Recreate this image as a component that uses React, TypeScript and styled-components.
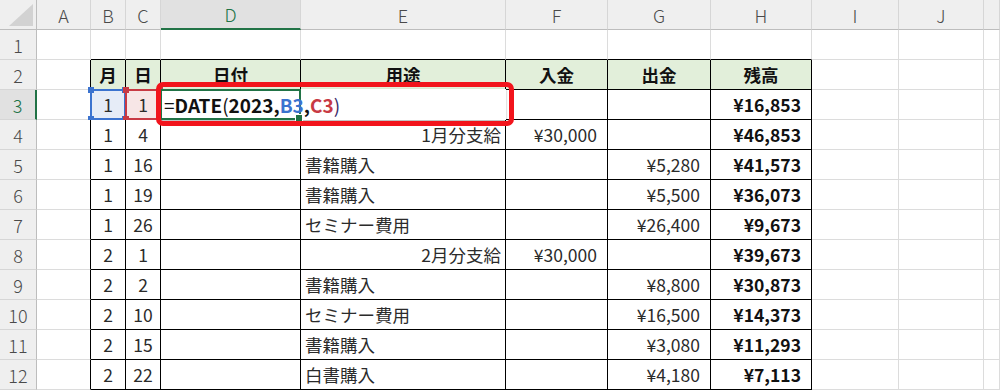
import styled, { createGlobalStyle } from "styled-components";

const GlobalStyle = createGlobalStyle`
  html, body { margin: 0; padding: 0; background: #fff; }
  body { font-family: "Noto Sans CJK JP", "Liberation Sans", sans-serif; }
`;

const GREEN = "#217346";
const GRID = "#dcdcdc";
const HEAD_LINE = "#bdbdbd";

const COLS = ["A", "B", "C", "D", "E", "F", "G", "H", "I", "J", ""];
const WIDTHS = [54, 35, 35, 140, 205, 102, 103, 101, 87, 85];

const DATA: Record<number, string[]> = {
  2: ["月", "日", "日付", "用途", "入金", "出金", "残高"],
  3: ["1", "1", "", "", "", "", "¥16,853"],
  4: ["1", "4", "", "1月分支給", "¥30,000", "", "¥46,853"],
  5: ["1", "16", "", "書籍購入", "", "¥5,280", "¥41,573"],
  6: ["1", "19", "", "書籍購入", "", "¥5,500", "¥36,073"],
  7: ["1", "26", "", "セミナー費用", "", "¥26,400", "¥9,673"],
  8: ["2", "1", "", "2月分支給", "¥30,000", "", "¥39,673"],
  9: ["2", "2", "", "書籍購入", "", "¥8,800", "¥30,873"],
  10: ["2", "10", "", "セミナー費用", "", "¥16,500", "¥14,373"],
  11: ["2", "15", "", "書籍購入", "", "¥3,080", "¥11,293"],
  12: ["2", "22", "", "白書購入", "", "¥4,180", "¥7,113"],
};

const inTable = (r: number, c: number) => r >= 2 && r <= 12 && c >= 1 && c <= 7;

const Sheet = styled.div`
  position: relative;
  display: grid;
  grid-template-columns: 37px ${WIDTHS.map((w) => w + "px").join(" ")} 1fr;
  grid-template-rows: 30px;
  grid-auto-rows: 30px;
  width: 1000px;
  height: 390px;
  overflow: hidden;
  color: #262626;
`;

const Corner = styled.div`
  position: relative;
  background: #efefef;
  border-right: 1px solid ${HEAD_LINE};
  border-bottom: 1px solid ${HEAD_LINE};
  box-sizing: border-box;
  svg { position: absolute; left: 9px; top: 4px; }
`;

const ColHeader = styled.div<{ $active?: boolean }>`
  box-sizing: border-box;
  display: flex;
  align-items: center;
  justify-content: center;
  background: ${(p) => (p.$active ? "#e1e1e1" : "#efefef")};
  color: ${(p) => (p.$active ? GREEN : "#4a4a4a")};
  border-right: 1px solid #d6d6d6;
  border-bottom: ${(p) => (p.$active ? `2px solid ${GREEN}` : `1px solid ${HEAD_LINE}`)};
  font-size: 18px;
  font-weight: 300;
`;

const RowHeader = styled.div<{ $active?: boolean }>`
  box-sizing: border-box;
  display: flex;
  align-items: center;
  justify-content: center;
  background: ${(p) => (p.$active ? "#e1e1e1" : "#efefef")};
  color: ${(p) => (p.$active ? GREEN : "#4a4a4a")};
  border-right: ${(p) => (p.$active ? `2px solid ${GREEN}` : `1px solid ${HEAD_LINE}`)};
  border-bottom: 1px solid #d6d6d6;
  font-size: 18px;
  font-weight: 300;
`;

const Cell = styled.div<{
  $align: "left" | "center" | "right";
  $bold?: boolean;
  $fill?: string;
  $br: string;
  $bb: string;
  $pr?: number;
}>`
  position: relative;
  box-sizing: border-box;
  display: flex;
  align-items: center;
  justify-content: ${(p) =>
    p.$align === "left" ? "flex-start" : p.$align === "right" ? "flex-end" : "center"};
  padding: 0 ${(p) => p.$pr ?? 4}px 0 4px;
  background: ${(p) => p.$fill ?? "#fff"};
  border-right: 1px solid ${(p) => p.$br};
  border-bottom: 1px solid ${(p) => p.$bb};
  font-size: 17.5px;
  font-weight: ${(p) => (p.$bold ? 700 : 400)};
  white-space: nowrap;
  color: ${(p) => (p.$bold ? "#111" : "#2b2b2b")};
`;

const RefFrame = styled.div<{ $color: string }>`
  position: absolute;
  left: -1px;
  top: -1px;
  right: -1px;
  bottom: -1px;
  border: 2px solid ${(p) => p.$color};
  pointer-events: none;
`;

const Handle = styled.span<{ $color: string; $x: "l" | "r"; $y: "t" | "b" }>`
  position: absolute;
  width: 6px;
  height: 6px;
  background: ${(p) => p.$color};
  ${(p) => (p.$x === "l" ? "left: -4px;" : "right: -4px;")}
  ${(p) => (p.$y === "t" ? "top: -4px;" : "bottom: -4px;")}
`;

const EditBox = styled.div`
  position: absolute;
  left: 160px;
  top: 89px;
  width: 346px;
  height: 31px;
  box-sizing: border-box;
  background: #fff;
  box-shadow: 0 1px 2px rgba(0, 0, 0, 0.35);
  display: flex;
  align-items: center;
  padding-left: 4px;
  font-size: 19px;
  font-weight: 700;
  color: #111;
  white-space: nowrap;
`;

const ActiveFrame = styled.div`
  position: absolute;
  left: 0;
  top: 0;
  width: 141px;
  height: 31px;
  box-sizing: border-box;
  border: 2px solid ${GREEN};
  &::after {
    content: "";
    position: absolute;
    right: -4px;
    bottom: -4px;
    width: 6px;
    height: 6px;
    background: ${GREEN};
    border: 1px solid #fff;
  }
`;

const Formula = styled.span`
  position: relative;
`;

const Tok = styled.span<{ $color?: string; $thin?: boolean }>`
  color: ${(p) => p.$color ?? "#111"};
  font-weight: ${(p) => (p.$thin ? 400 : 700)};
`;

const Callout = styled.div`
  position: absolute;
  left: 156px;
  top: 82px;
  width: 358px;
  height: 44px;
  box-sizing: border-box;
  border: 5px solid #f2141c;
  border-radius: 7px;
  pointer-events: none;
`;

function RefMark({ color }: { color: string }) {
  return (
    <RefFrame $color={color}>
      <Handle $color={color} $x="l" $y="t" />
      <Handle $color={color} $x="r" $y="t" />
      <Handle $color={color} $x="l" $y="b" />
      <Handle $color={color} $x="r" $y="b" />
    </RefFrame>
  );
}

function renderCell(r: number, c: number) {
  const br = inTable(r, c) || inTable(r, c + 1) ? "#000" : GRID;
  const bb = inTable(r, c) || inTable(r + 1, c) ? "#000" : GRID;
  const row = DATA[r];
  const text = row && c >= 1 && c <= 7 ? row[c - 1] : "";
  let align: "left" | "center" | "right" = "left";
  let bold = false;
  let fill: string | undefined;
  let pr = 4;
  if (r === 2 && inTable(r, c)) {
    align = "center";
    bold = true;
    fill = "#e2efda";
  } else if (c === 1 || c === 2) {
    align = "center";
  } else if (c === 4) {
    align = /^\d/.test(text) ? "right" : "left";
  } else if (c >= 5 && c <= 7) {
    align = "right";
    pr = 10;
    bold = c === 7;
  }
  if (r === 3 && c === 1) fill = "#e6ecf7";
  if (r === 3 && c === 2) fill = "#f7e6e6";
  return (
    <Cell key={`${r}-${c}`} $align={align} $bold={bold} $fill={fill} $br={br} $bb={bb} $pr={pr}>
      {text}
      {r === 3 && c === 1 && <RefMark color="#3b73cf" />}
      {r === 3 && c === 2 && <RefMark color="#c83a44" />}
    </Cell>
  );
}

export default function App() {
  const rows = Array.from({ length: 12 }, (_, i) => i + 1);
  return (
    <>
      <GlobalStyle />
      <Sheet>
        <Corner>
          <svg width="24" height="22" viewBox="0 0 24 22">
            <polygon points="24,0 24,22 0,22" fill="#d2d2d2" />
          </svg>
        </Corner>
        {COLS.map((name, i) => (
          <ColHeader key={i} $active={name === "D"}>
            {name}
          </ColHeader>
        ))}
        {rows.map((r) => [
          <RowHeader key={`h${r}`} $active={r === 3}>
            {r}
          </RowHeader>,
          ...COLS.map((_, c) => renderCell(r, c)),
        ])}
        <EditBox>
          <ActiveFrame />
          <Formula>
            <Tok $thin>=</Tok>
            <Tok>DATE</Tok>
            <Tok $thin>(</Tok>
            <Tok>2023,</Tok>
            <Tok $color="#3b73cf">B3</Tok>
            <Tok>,</Tok>
            <Tok $color="#c83a44">C3</Tok>
            <Tok $thin $color="#3a2a6a">)</Tok>
          </Formula>
        </EditBox>
        <Callout />
      </Sheet>
    </>
  );
}
